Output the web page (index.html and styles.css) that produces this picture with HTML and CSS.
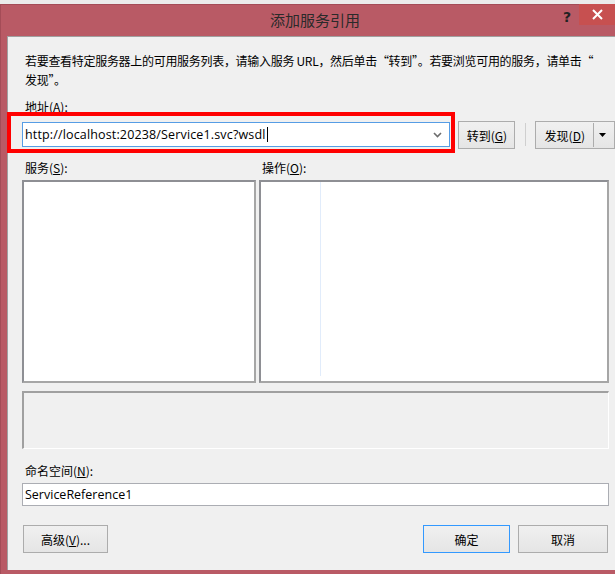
FILE: index.html
```html
<!DOCTYPE html>
<html lang="zh-CN">
<head>
<meta charset="utf-8">
<title>添加服务引用</title>
<link rel="stylesheet" href="styles.css">
</head>
<body>
<div class="window">
  <div class="titlebar">
    <div class="title">添加服务引用</div>
    <div class="help">?</div>
    <div class="close">
      <svg width="11" height="11" viewBox="0 0 11 11"><path d="M1 1L10 10M10 1L1 10" stroke="#fff" stroke-width="2"/></svg>
    </div>
  </div>
  <div class="client">
    <p class="desc">若要查看特定服务器上的可用服务列表，请输入服务 URL，然后单击“转到”。若要浏览可用的服务，请单击“<br>发现”。</p>
    <div class="label lbl-addr">地址(<u>A</u>):</div>
    <div class="addr-row">
      <div class="combo">
        <span class="combo-text">http://localhost:20238/Service1.svc?wsdl</span><span class="caret"></span>
        <svg class="chev" width="9" height="6" viewBox="0 0 9 6"><path d="M1 1L4.5 4.5L8 1" fill="none" stroke="#6d6d6d" stroke-width="1.6"/></svg>
      </div>
      <div class="btn btn-go">转到(<u>G</u>)</div>
      <div class="sep"></div>
      <div class="btn split">
        <span class="split-main">发现(<u>D</u>)</span>
        <span class="split-arrow"><svg width="7" height="4" viewBox="0 0 7 4"><path d="M0 0H7L3.5 4Z" fill="#000"/></svg></span>
      </div>
      <div class="highlight"></div>
    </div>
    <div class="lists-labels">
      <div class="label col-svc">服务(<u>S</u>):</div>
      <div class="label col-ops">操作(<u>O</u>):</div>
    </div>
    <div class="lists">
      <div class="listbox svc"></div>
      <div class="listbox ops"><div class="ops-line"></div></div>
    </div>
    <div class="info-panel"></div>
    <div class="label lbl-ns">命名空间(<u>N</u>):</div>
    <div class="textbox">ServiceReference1</div>
    <div class="buttons">
      <div class="btn btn-adv">高级(<u>V</u>)...</div>
      <div class="spacer"></div>
      <div class="btn btn-ok">确定</div>
      <div class="btn btn-cancel">取消</div>
    </div>
  </div>
</div>
</body>
</html>
```
FILE: styles.css
```css
* { box-sizing: border-box; }
html, body { margin: 0; padding: 0; }
body {
  width: 615px;
  height: 574px;
  overflow: hidden;
  background: #ebebeb;
  font-family: "Open Sans", "Noto Sans CJK SC", sans-serif;
  font-size: 12px;
  color: #000;
}
u { text-decoration: underline; text-underline-offset: 1px; }

.window {
  margin-top: 4px;
  height: 570px;
  background: #b95a65;
  border-top: 1px solid #a44c57;
  border-left: 1px solid #a44c57;
  padding: 0 0 4px 6px;
  display: flex;
  flex-direction: column;
}

.titlebar {
  height: 31px;
  flex: none;
  display: flex;
  align-items: flex-start;
}
.title {
  font-family: "Noto Sans CJK SC", sans-serif;
  font-size: 15px;
  color: #2a2a2a;
  margin-left: 263px;
  margin-top: 5px;
  line-height: 20px;
}
.help {
  font-family: "DejaVu Sans", sans-serif;
  font-weight: bold;
  font-size: 14px;
  color: #222;
  margin-left: auto;
  margin-top: 3px;
  margin-right: 8px;
  line-height: 18px;
}
.close {
  width: 36px;
  height: 21px;
  background: #c75050;
  display: flex;
  align-items: center;
  justify-content: center;
  margin-top: -1px;
}

.client {
  flex: 1;
  background: #f0f0f0;
  border-top: 1px solid #a0a0a0;
  border-left: 1px solid #a0a0a0;
  padding: 0 6px 0 14px;
  display: flex;
  flex-direction: column;
}

.desc {
  margin: 14px 0 0 3px;
  line-height: 19px;
  font-family: "Noto Sans CJK SC", sans-serif;
  white-space: nowrap;
  letter-spacing: -0.3px;
}
.label {
  line-height: 17px;
  font-family: "Noto Sans CJK SC", sans-serif;
}
.lbl-addr { margin: 9px 0 0 3px; }

.addr-row {
  position: relative;
  display: flex;
  align-items: flex-start;
  margin-top: 4px;
  height: 32px;
  margin-right: -6px;
}
.combo {
  width: 430px;
  height: 25px;
  background: #fff;
  border: 1px solid #569de5;
  display: flex;
  align-items: center;
  padding-left: 2px;
  position: relative;
  margin-top: 3px;
}
.combo-text { font-size: 12.5px; line-height: 16px; letter-spacing: 0.15px; }
.caret { width: 1px; height: 15px; background: #000; margin-left: 1px; }
.chev { position: absolute; right: 7px; top: 9px; }

.btn {
  border: 1px solid #acacac;
  background: linear-gradient(#f0f0f0, #e5e5e5);
  display: flex;
  align-items: center;
  justify-content: center;
  font-family: "Noto Sans CJK SC", sans-serif;
  font-size: 12px;
  height: 28px;
}
.btn-go { width: 57px; margin-left: 8px; margin-top: 2px; }
.sep { width: 1px; height: 23px; background: #cfcfcf; margin: 4px 9px 0 10px; }
.split { width: 80px; margin-top: 2px; justify-content: flex-start; }
.split-main { width: 57px; text-align: center; }
.split-arrow {
  border-left: 1px solid #acacac;
  height: 24px;
  width: 18px;
  display: flex;
  align-items: center;
  justify-content: center;
}
.highlight {
  position: absolute;
  left: -15px;
  top: -7px;
  width: 448px;
  height: 41px;
  border: 4px solid #ff0000;
  pointer-events: none;
}

.lists-labels {
  display: flex;
  margin-top: 8px;
}
.col-svc { width: 237px; padding-left: 3px; }
.col-ops { padding-left: 3px; }

.lists {
  display: flex;
  gap: 3px;
  margin-top: 4px;
  height: 203px;
}
.listbox {
  background: #fff;
  border: 2px solid #8e8f94;
  border-right-color: #a6a6a6;
  border-bottom-color: #a6a6a6;
}
.svc { width: 234px; }
.ops { flex: 1; padding-left: 59px; }
.ops-line { width: 1px; height: 194px; background: #e1ecfb; }

.info-panel {
  margin-top: 8px;
  height: 58px;
  border-top: 2px solid #a0a0a0;
  border-left: 2px solid #a0a0a0;
  border-right: 1px solid #fff;
  border-bottom: 1px solid #fff;
}
.lbl-ns { margin: 13px 0 0 3px; }
.textbox {
  margin-top: 4px;
  height: 23px;
  background: #fff;
  border: 1px solid #abadb3;
  padding-left: 2px;
  display: flex;
  align-items: center;
  font-size: 12.5px;
}

.buttons {
  display: flex;
  margin-top: 19px;
}
.btn-adv { width: 85px; margin-left: 1px; }
.spacer { flex: 1; }
.btn-ok { width: 87px; border-color: #3399ff; }
.btn-cancel { width: 90px; margin-left: 8px; margin-right: 1px; }
```
